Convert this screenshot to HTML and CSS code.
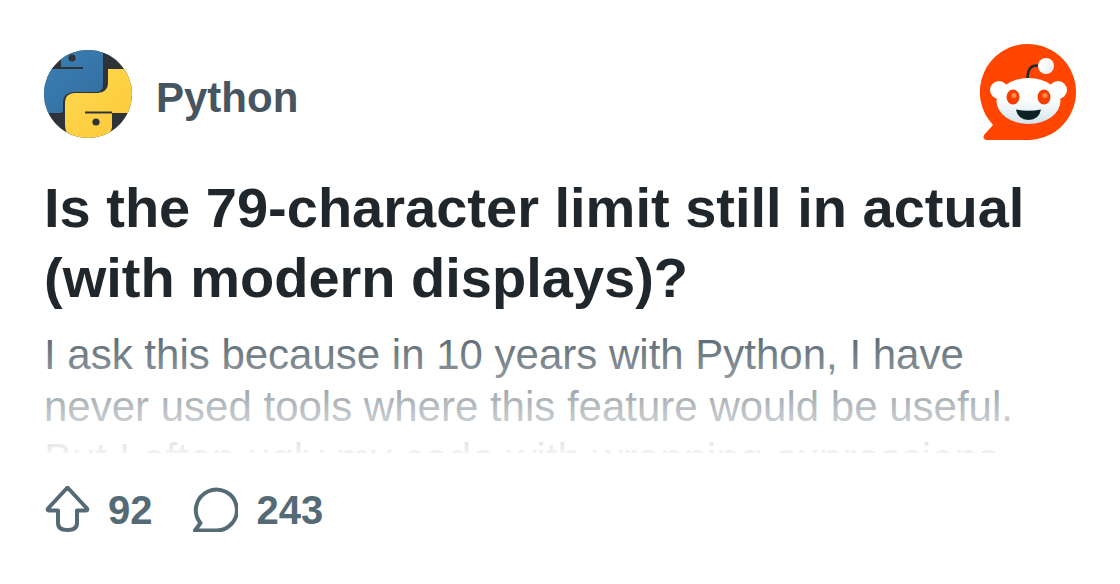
FILE: index.html
```html
<!DOCTYPE html>
<html lang="en">
<head>
<meta charset="utf-8">
<title>Is the 79-character limit still in actual</title>
<link rel="stylesheet" href="styles.css">
</head>
<body>
<main class="card">
  <header class="head">
    <div class="community">
      <svg class="avatar" viewBox="0 0 88 88" aria-hidden="true">
        <defs>
          <clipPath id="disc"><circle cx="44" cy="44" r="44"/></clipPath>
          <linearGradient id="py-blue" x1="0" y1="0" x2="1" y2="1"><stop offset="0" stop-color="#3a80b6"/><stop offset="1" stop-color="#346d9e"/></linearGradient>
          <linearGradient id="py-yellow" x1="0" y1="0" x2="1" y2="1"><stop offset="0" stop-color="#ffd94f"/><stop offset="1" stop-color="#fdc83a"/></linearGradient>
        </defs>
        <g clip-path="url(#disc)">
          <rect width="88" height="88" fill="#2d3339"/>
          <path d="M17 18 V9 Q17 1 30 -2 H59 V35 Q59 41 53 42 H30 Q19 43 19 52 V60 Q19 63 16 63 H-5 V18 Z" fill="url(#py-blue)"/>
          <path d="M64 19 H90 V63 H68 V77 Q68 85 52 90 H30 Q21 84 21 75 V52 Q21 44 30 43 H54 Q64 42 64 33 Z" fill="url(#py-yellow)"/>
          <circle cx="28" cy="8" r="3.6" fill="#2d3339"/>
          <circle cx="52" cy="72" r="3.6" fill="#2d3339"/>
          <rect x="8" y="17" width="31" height="2" fill="#2d3339"/>
          <rect x="41" y="61.5" width="27" height="2" fill="#2d3339"/>
        </g>
      </svg>
      <span class="name">Python</span>
    </div>
    <svg class="logo" viewBox="0 0 96 96" aria-hidden="true">
      <defs>
        <linearGradient id="rd-face" x1="0" y1="0" x2="0" y2="1"><stop offset="0.45" stop-color="#fff"/><stop offset="1" stop-color="#d3e2ea"/></linearGradient>
        <linearGradient id="rd-ball" x1="0" y1="0" x2="1" y2="1"><stop offset="0.4" stop-color="#fff"/><stop offset="1" stop-color="#d8e4ea"/></linearGradient>
      </defs>
      <path d="M48 0 A48 48 0 1 1 48 96 H8 Q2 96 4 91 L13 81 A48 48 0 0 1 48 0Z" fill="#ff4500"/>
      <path d="M60 22 Q48 19 47.5 34" fill="none" stroke="#1e2a2e" stroke-width="2.6" stroke-linecap="round"/>
      <circle cx="66" cy="22" r="8" fill="url(#rd-ball)"/>
      <circle cx="19" cy="46" r="9" fill="#fff"/>
      <circle cx="78" cy="46" r="9" fill="#fff"/>
      <ellipse cx="48.500" cy="57" rx="32" ry="23" fill="url(#rd-face)"/>
      <ellipse cx="33" cy="53" rx="6.500" ry="7.500" fill="#f53f02"/>
      <ellipse cx="64" cy="53" rx="6.500" ry="7.500" fill="#f53f02"/>
      <circle cx="34" cy="51.500" r="2.500" fill="#ff8a4c"/>
      <circle cx="65" cy="51.500" r="2.500" fill="#ff8a4c"/>
      <path d="M36 65.500 Q48 68 61 65.500 Q59 76 48.500 76 Q38 76 36 65.500Z" fill="#0d2226"/>
    </svg>
  </header>
  <h1 class="title">Is the 79-character limit still in actual<br>(with modern displays)?</h1>
  <div class="excerpt">
    <p class="excerpt-text">I ask this because in 10 years with Python, I have<br>never used tools where this feature would be useful.<br>But I often ugly my code with wrapping expressions</p>
    <div class="fade"></div>
  </div>
  <footer class="stats">
    <div class="stat">
      <svg class="icon" viewBox="0 0 46 46" aria-hidden="true">
        <path d="M23.500 1.500 L43 22.500 Q44 24.500 41.500 24.500 H33 V37 Q33 44 23.500 44 Q14 44 14 37 V24.500 H5.500 Q3 24.500 4 22.500 Z" fill="none" stroke="#546a75" stroke-width="4" stroke-linejoin="round"/>
      </svg>
      <span class="count">92</span>
    </div>
    <div class="stat stat-comments">
      <svg class="icon" viewBox="0 0 46 46" aria-hidden="true">
        <path d="M3 44.500 L8.500 37 A20.500 20.500 0 1 1 23 44.500 Z" fill="none" stroke="#546a75" stroke-width="4" stroke-linejoin="round"/>
      </svg>
      <span class="count">243</span>
    </div>
  </footer>
</main>
</body>
</html>
```
FILE: styles.css
```css
* { box-sizing: border-box; }
html, body { margin: 0; background: #fff; }
body { width: 1120px; height: 584px; overflow: hidden; font-family: "Liberation Sans", Arial, sans-serif; }
.card { padding: 44px 44px 0; display: flex; flex-direction: column; }
.head { display: flex; justify-content: space-between; align-items: flex-start; height: 96px; }
.community { display: flex; align-items: center; gap: 24px; margin-top: 6px; }
.avatar { width: 88px; height: 88px; display: block; }
.name { padding-top: 8px; font-size: 42px; font-weight: 700; color: #46555f; }
.logo { width: 96px; height: 96px; display: block; }
.title { margin: 33px 0 0; font-size: 56px; line-height: 70px; font-weight: 700; color: #1f272c; }
.excerpt { position: relative; height: 124px; margin-top: 16px; overflow: hidden; }
.excerpt-text { margin: 0; font-size: 42px; line-height: 52px; color: #52616b; white-space: nowrap; }
.fade { position: absolute; inset: 0; background: linear-gradient(to bottom, rgba(255,255,255,0) 0%, rgba(255,255,255,0.92) 100%); }
.stats { display: flex; gap: 39px; margin-top: 33px; color: #546a75; font-size: 40px; font-weight: 700; }
.stat { display: flex; align-items: center; gap: 18px; height: 46px; }
.stat-comments { gap: 19px; }
.count { padding-top: 2px; line-height: 44px; }
.icon { width: 46px; height: 46px; display: block; }
```
